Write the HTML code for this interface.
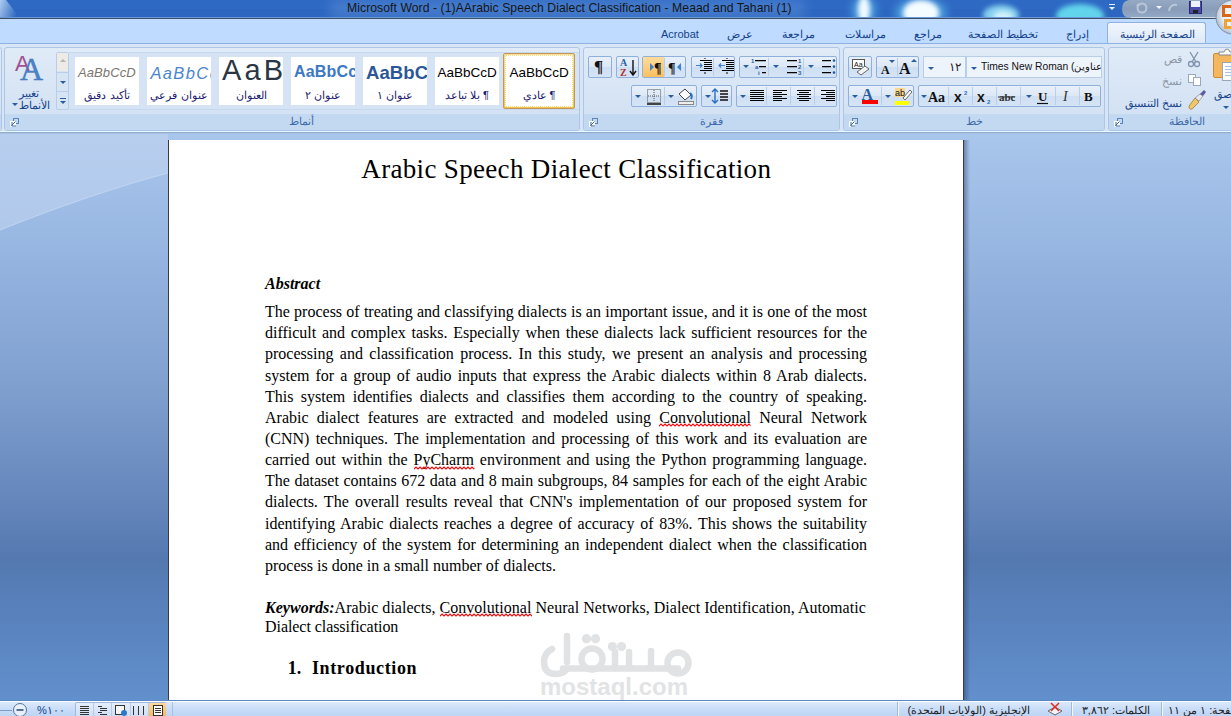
<!DOCTYPE html><html><head><meta charset="utf-8"><style>
*{margin:0;padding:0;box-sizing:border-box}
html,body{width:1231px;height:716px;overflow:hidden;background:#6a93cc}
body{position:relative;font-family:"Liberation Sans",sans-serif;white-space:nowrap}
.a{position:absolute}
svg{position:absolute;overflow:visible}
#title{left:0;top:0;width:1231px;height:19px;background:#2b62b6;overflow:hidden}
#ttext{left:347px;top:1px;font-size:12.2px;color:#161616;white-space:pre;line-height:14px;letter-spacing:0.06px}
#tabs{left:0;top:19px;width:1231px;height:25px;background:#bfdbff}
.tab{top:10px;font-size:11px;color:#15428b;white-space:pre;line-height:12px}
#ribbon{left:0;top:44px;width:1231px;height:90px;background:linear-gradient(180deg,#d9e6f6 0%,#d6e4f5 100%)}
.grp{top:3px;height:84px;border:1px solid #adc6e5;border-radius:3px;background:linear-gradient(180deg,#e0ebf7 0%,#d8e5f5 50%,#d0e0f3 100%);overflow:hidden}
.glab{position:absolute;left:0;right:0;bottom:0;height:16px;background:#c3d8f1;text-align:center;font-size:11px;color:#3e6aaa;line-height:15px}
.btn{border:1px solid #8fb0da;border-radius:2px;background:linear-gradient(180deg,#e8f0fa 0%,#dde8f6 48%,#cfdff3 52%,#d5e4f5 100%);overflow:hidden}
.sep{position:absolute;top:1px;bottom:1px;width:1px;background:#b9cfe9}
.dd{position:absolute;width:0;height:0;border-left:3px solid transparent;border-right:3px solid transparent;border-top:3px solid #2a5d9f}
#work{left:0;top:134px;width:1231px;height:566px;background:linear-gradient(180deg,#a9c6ec 0%,#97b6e1 20%,#7f9fcf 45%,#6586bb 65%,#5479b0 75%,#5a84c0 88%,#6290cc 100%)}
#page{left:168px;top:140px;width:796px;height:560px;background:#fff;border-left:1px solid #3c3c3c;border-right:1px solid #3c3c3c}
.ln{left:265px;width:602px;font-family:"Liberation Serif",serif;font-size:16px;color:#000;white-space:nowrap;text-align:justify;text-align-last:justify;line-height:21px;height:21px}
.last{text-align:left;text-align-last:left}
.ttl{font-family:"Liberation Serif",serif;font-size:27px;line-height:30px;letter-spacing:0.27px;white-space:nowrap;color:#000}
.intro{font-family:"Liberation Serif",serif;font-size:18px;font-weight:bold;line-height:21px;white-space:nowrap;color:#000}
u.sp{text-decoration:none;position:relative}
svg.zz{position:absolute;left:0;top:14.5px;width:100%;height:4px}
#status{left:0;top:700px;width:1231px;height:16px;background:linear-gradient(180deg,#5a87c6 0px,#5a87c6 1px,#ffffff 1px,#ffffff 2px,#dce9fb 2px,#c9ddf8 9px,#bdd5f4 16px)}
.st{top:704px;font-size:11px;color:#15428b;white-space:pre;line-height:12px}
.ar{direction:rtl;unicode-bidi:plaintext}
.sbox{top:57px;height:48px;width:64px;background:#fff;overflow:hidden}
.ssamp{position:absolute;left:0;right:0;top:7px;text-align:center;white-space:nowrap;line-height:18px}
.slab{position:absolute;left:0;right:0;top:32px;text-align:center;white-space:nowrap;font-size:11px;color:#1a1a6e;line-height:13px}
</style></head><body>
<svg width="0" height="0" style="position:absolute"><defs><pattern id="zz" width="4" height="4" patternUnits="userSpaceOnUse"><path d="M-2,1 L0,3 L2,1 L4,3 L6,1" stroke="#ff0000" fill="none" stroke-width="1.2"/></pattern></defs></svg>
<div id="title" class="a">
<svg width="1231" height="19" style="left:0;top:0">
<defs>
<filter id="bl" x="-50%" y="-50%" width="200%" height="200%"><feGaussianBlur stdDeviation="4"/></filter>
<filter id="bl3" x="-50%" y="-50%" width="200%" height="200%"><feGaussianBlur stdDeviation="2.5"/></filter>
<filter id="bl2" x="-50%" y="-50%" width="200%" height="200%"><feGaussianBlur stdDeviation="6"/></filter>
<linearGradient id="tl" x1="0" x2="1" y1="0" y2="0.3"><stop offset="0" stop-color="#d6ecff" stop-opacity="1"/><stop offset="1" stop-color="#d6ecff" stop-opacity="0"/></linearGradient>
</defs>
<rect x="0" y="0" width="1231" height="19" fill="#2c66c0"/>
<rect x="0" y="0" width="1231" height="9" fill="#3470c8" opacity=".35"/>
<polygon points="0,0 6,0 20,18 0,18" fill="url(#tl)" opacity=".75"/>
<rect x="330" y="0" width="475" height="19" fill="#6f9fe0" opacity=".35" filter="url(#bl2)"/>
<ellipse cx="864" cy="11" rx="12" ry="14" fill="#58b8ec" opacity=".7" filter="url(#bl)"/>
<ellipse cx="921" cy="13" rx="26" ry="14" fill="#58b8ec" opacity=".7" filter="url(#bl)"/>
<ellipse cx="864" cy="10" rx="6" ry="14" fill="#f0fbff" filter="url(#bl3)"/>
<ellipse cx="921" cy="13" rx="18" ry="13" fill="#f4fcff" filter="url(#bl3)"/>
<ellipse cx="1001" cy="15" rx="18" ry="10" fill="#8fdcf4" opacity=".9" filter="url(#bl3)"/>
<ellipse cx="1003" cy="17" rx="10" ry="6" fill="#e8faff" opacity=".8" filter="url(#bl3)"/>
<ellipse cx="1080" cy="16" rx="24" ry="12" fill="#62d4ec" filter="url(#bl3)"/>
</svg>
<div id="ttext" class="a">Microsoft Word - (1)AArabic Speech Dialect Classification - Meaad and Tahani (1)</div>
</div>
<div class="a" style="left:0;top:17px;width:1231px;height:1px;background:#6c9ad8"></div>
<div class="a" style="left:0;top:18px;width:1231px;height:1px;background:#3d4f68"></div>
<svg width="110" height="19" style="left:1115px;top:0">
<defs><linearGradient id="qg" x1="0" x2="0" y1="0" y2="1"><stop offset="0" stop-color="#a9b4c4"/><stop offset=".5" stop-color="#98a6b8"/><stop offset="1" stop-color="#a7b6c8"/></linearGradient></defs>
<path d="M14,0 H116 V18 H16 Q7,18 7,9 Q7,1 14,0 Z" fill="url(#qg)" opacity=".85"/>
<path d="M16,17.5 H112" stroke="#dfe6ee" stroke-width="1" opacity=".8"/>
<circle cx="27" cy="8" r="4.5" fill="none" stroke="#b8c6d8" stroke-width="2"/>
<path d="M23,3 l2,3 l-4,0 z" fill="#b8c6d8"/>
<path d="M41,6 l3,3 l3,-3 z" fill="#f4f8fc"/>
<path d="M54,11 q1,-7 8,-6" fill="none" stroke="#b8c6d8" stroke-width="2"/>
</svg>
<div class="a" style="left:1109px;top:4px;width:6px;height:1px;background:#e8f0ff"></div>
<div class="dd" style="left:1109px;top:7px;border-top-color:#e8f0ff"></div>
<svg width="16" height="16" style="left:1188px;top:0px">
<rect x="1.5" y="1.5" width="12" height="12" fill="#4a4aa8" stroke="#2a2a7a"/>
<rect x="3" y="1" width="9" height="6" fill="#eef2ff"/>
<rect x="5" y="10" width="5" height="3" fill="#222"/>
</svg>
<div id="tabs" class="a"></div>
<div class="a" style="left:1107px;top:22px;width:99px;height:24px;border:1px solid #8db2e3;border-bottom:none;border-radius:3px 3px 0 0;background:linear-gradient(180deg,#f1f6fd 0%,#e3edf9 60%,#dbe7f6 100%)"></div>
<div class="a tab" style="left:661px;top:28px">Acrobat</div>
<div class="a tab" style="left:707px;width:46px;text-align:right;top:28px" dir="rtl">عرض</div>
<div class="a tab" style="left:761px;width:54px;text-align:right;top:28px" dir="rtl">مراجعة</div>
<div class="a tab" style="left:824px;width:62px;text-align:right;top:28px" dir="rtl">مراسلات</div>
<div class="a tab" style="left:895px;width:47px;text-align:right;top:28px" dir="rtl">مراجع</div>
<div class="a tab" style="left:951px;width:87px;text-align:right;top:28px" dir="rtl">تخطيط الصفحة</div>
<div class="a tab" style="left:1047px;width:42px;text-align:right;top:28px" dir="rtl">إدراج</div>
<div class="a tab" style="left:1098px;width:97px;text-align:right;top:28px" dir="rtl">الصفحة الرئيسية</div>
<svg width="40" height="40" style="left:1210px;top:0">
<defs><radialGradient id="ob" cx="55%" cy="45%" r="60%"><stop offset="0" stop-color="#ffffff"/><stop offset=".6" stop-color="#e6eef6"/><stop offset="1" stop-color="#aab8c8"/></radialGradient></defs>
<circle cx="23" cy="17" r="17" fill="url(#ob)" stroke="#7e8ea2" stroke-width="1"/>
<path d="M12,5 h10 v3 h-7 v6 h7 v3 h-10 z" fill="#d9661a"/>
<path d="M14,19 h8 v10 h-8 z M17,22 v4 h5 v-4 z" fill="#eea23a" fill-rule="evenodd"/>
</svg>
<div id="ribbon" class="a"></div>
<div class="a" style="left:0;top:43px;width:1231px;height:1px;background:#8db2e3"></div>
<div class="a" style="left:0;top:131px;width:1231px;height:1px;background:#e6f8ff"></div>
<div class="a" style="left:0;top:132px;width:1231px;height:1px;background:#94adcd"></div>
<div class="a" style="left:0;top:133px;width:1231px;height:1px;background:#a7c1e4"></div>
<div class="a grp" style="left:-3px;top:47px;width:5px;height:84px"><div class="glab"></div><svg width="10" height="10" style="left:5px;top:70px"><rect x="3.5" y="0.5" width="5" height="5" fill="none" stroke="#5d84b8"/><rect x="0.5" y="3.5" width="5" height="5" fill="#fff" stroke="#fff"/><path d="M1.5,7.5 l4,-4 M2,4 v4 h4" stroke="#3b68a8" fill="none"/></svg></div>
<div class="a grp" style="left:4px;top:47px;width:576px;height:84px"><div class="glab"><span style="padding-left:18px">أنماط</span></div><svg width="10" height="10" style="left:5px;top:70px"><rect x="3.5" y="0.5" width="5" height="5" fill="none" stroke="#5d84b8"/><rect x="0.5" y="3.5" width="5" height="5" fill="#fff" stroke="#fff"/><path d="M1.5,7.5 l4,-4 M2,4 v4 h4" stroke="#3b68a8" fill="none"/></svg></div>
<div class="a grp" style="left:583px;top:47px;width:257px;height:84px"><div class="glab">فقرة</div><svg width="10" height="10" style="left:5px;top:70px"><rect x="3.5" y="0.5" width="5" height="5" fill="none" stroke="#5d84b8"/><rect x="0.5" y="3.5" width="5" height="5" fill="#fff" stroke="#fff"/><path d="M1.5,7.5 l4,-4 M2,4 v4 h4" stroke="#3b68a8" fill="none"/></svg></div>
<div class="a grp" style="left:843px;top:47px;width:262px;height:84px"><div class="glab">خط</div><svg width="10" height="10" style="left:5px;top:70px"><rect x="3.5" y="0.5" width="5" height="5" fill="none" stroke="#5d84b8"/><rect x="0.5" y="3.5" width="5" height="5" fill="#fff" stroke="#fff"/><path d="M1.5,7.5 l4,-4 M2,4 v4 h4" stroke="#3b68a8" fill="none"/></svg></div>
<div class="a grp" style="left:1108px;top:47px;width:158px;height:84px"><div class="glab">الحافظة</div><svg width="10" height="10" style="left:5px;top:70px"><rect x="3.5" y="0.5" width="5" height="5" fill="none" stroke="#5d84b8"/><rect x="0.5" y="3.5" width="5" height="5" fill="#fff" stroke="#fff"/><path d="M1.5,7.5 l4,-4 M2,4 v4 h4" stroke="#3b68a8" fill="none"/></svg></div>
<svg width="40" height="32" style="left:12px;top:52px">
<text x="3" y="19" font-family="Liberation Sans" font-size="22" fill="#a0508e">A</text>
<text x="8" y="28" font-family="Liberation Serif" font-size="32" fill="#4a84c8" stroke="#3a6fb0" stroke-width=".4">A</text>
</svg>
<div class="a ar" style="left:8px;top:87px;width:42px;text-align:center;font-size:11px;color:#15428b;line-height:12px" dir="rtl">تغيير</div>
<div class="a ar" style="left:17px;top:99px;width:34px;text-align:center;font-size:11px;color:#15428b;line-height:12px" dir="rtl">الأنماط</div>
<div class="dd" style="left:12px;top:103px;border-top-color:#2a5d9f"></div>
<div class="a" style="left:56px;top:52px;width:13px;height:58px;border:1px solid #b8cde8;border-radius:2px;background:#d6e4f4"></div>
<div class="a" style="left:57px;top:53px;width:11px;height:18px;background:#ecebe6"></div>
<div class="a" style="left:57px;top:72px;width:11px;height:1px;background:#b8cde8"></div>
<div class="a" style="left:57px;top:91px;width:11px;height:1px;background:#b8cde8"></div>
<div class="dd" style="left:60px;top:59px;border-top:none;border-bottom:3px solid #b4b4b4"></div>
<div class="dd" style="left:60px;top:81px;border-top-color:#2a5d9f"></div>
<div class="a" style="left:60px;top:98px;width:6px;height:1px;background:#2a5d9f"></div>
<div class="dd" style="left:60px;top:101px;border-top-color:#2a5d9f"></div>
<div class="a" style="left:69px;top:52px;width:510px;height:58px;background:#d5e3f4;border-top:1px solid #c6d8ee;border-bottom:1px solid #c6d8ee"></div>
<div class="a sbox" style="left:75px"><div class="ssamp" style="left:3px;right:auto;text-align:left;font-size:13px;font-weight:normal;font-style:italic;color:#7b7670;top:0.90px;line-height:30px;letter-spacing:0.1px">AaBbCcD</div><div class="slab" dir="rtl">تأكيد دقيق</div></div>
<div class="a sbox" style="left:147px"><div class="ssamp" style="left:3.4px;right:auto;text-align:left;font-size:16.5px;font-weight:normal;font-style:italic;color:#4a86cf;top:0.88px;line-height:30px;letter-spacing:1.4px">AaBbCc</div><div class="slab" dir="rtl">عنوان فرعي</div></div>
<div class="a sbox" style="left:219px"><div class="ssamp" style="left:3px;right:auto;text-align:left;font-size:29px;font-weight:normal;font-style:normal;color:#2a3644;top:-2.45px;line-height:30px;letter-spacing:3.2px">AaBbC</div><div class="slab" dir="rtl">العنوان</div></div>
<div class="a sbox" style="left:291px"><div class="ssamp" style="left:3px;right:auto;text-align:left;font-size:16px;font-weight:bold;font-style:normal;color:#3b78c6;top:0.36px;line-height:30px;letter-spacing:0.2px">AaBbCc</div><div class="slab" dir="rtl">عنوان ٢</div></div>
<div class="a sbox" style="left:363px"><div class="ssamp" style="left:3px;right:auto;text-align:left;font-size:18.5px;font-weight:bold;font-style:normal;color:#2b5798;top:0.99px;line-height:30px;letter-spacing:0.1px">AaBbC</div><div class="slab" dir="rtl">عنوان ١</div></div>
<div class="a sbox" style="left:435px"><div class="ssamp" style="left:2.5px;right:auto;text-align:left;font-size:13.5px;font-weight:normal;font-style:normal;color:#000;top:1.12px;line-height:30px;letter-spacing:0px">AaBbCcD</div><div class="slab" dir="rtl">¶ بلا تباعد</div></div>
<div class="a" style="left:503px;top:53px;width:72px;height:56px;border:1px solid #c29858;border-radius:2px;background:linear-gradient(180deg,#fbdc9a,#f7bf52);"></div>
<div class="a" style="left:505px;top:55px;width:68px;height:52px;background:#fff;border:1px dotted #f8e070"></div>
<div class="a sbox" style="left:507px"><div class="ssamp" style="left:2.5px;right:auto;text-align:left;font-size:13.5px;font-weight:normal;font-style:normal;color:#000;top:1.12px;line-height:30px;letter-spacing:0px">AaBbCcD</div><div class="slab" dir="rtl">¶ عادي</div></div>
<div class="a btn" style="left:588px;top:56px;width:24px;height:22px;"></div>
<div class="a" style="left:594px;top:57px;font:bold 17px 'Liberation Serif';color:#111;line-height:20px">¶</div>
<div class="a btn" style="left:616px;top:56px;width:23px;height:22px;"></div>
<svg width="24" height="22" style="left:616px;top:56px">
<text x="4" y="10" font-family="Liberation Serif" font-size="10" fill="#2d5fa8" font-weight="bold">A</text>
<text x="4" y="20" font-family="Liberation Serif" font-size="10" fill="#b0302a" font-weight="bold">Z</text>
<path d="M17,4 V18 M14,15 L17,19 L20,15" stroke="#111" stroke-width="1.4" fill="none"/>
</svg>
<div class="a btn" style="left:642px;top:56px;width:44px;height:22px;"><div class="sep" style="left:21px"></div></div>
<div class="a" style="left:643px;top:57px;width:21px;height:20px;background:linear-gradient(180deg,#fddc9c,#fbc060)"></div>
<svg width="44" height="22" style="left:642px;top:56px">
<path d="M8,7 L12,11 L8,15 Z" fill="#3b7fd0"/>
<text x="12" y="17" font-family="Liberation Serif" font-size="14" fill="#111" font-weight="bold">¶</text>
<text x="26" y="17" font-family="Liberation Serif" font-size="14" fill="#111" font-weight="bold">¶</text>
<path d="M39,7 L35,11 L39,15 Z" fill="#3b7fd0"/>
</svg>
<div class="a btn" style="left:691px;top:56px;width:44px;height:22px;"><div class="sep" style="left:21px"></div></div>
<svg width="44" height="22" style="left:691px;top:56px">
<g stroke="#000" stroke-width="1">
<path d="M9,4.5 h12 M13,6.5 h8 M13,8.5 h8 M13,10.5 h8 M13,12.5 h8 M9,14.5 h12"/>
<path d="M31,4.5 h12 M35,6.5 h8 M35,8.5 h8 M35,10.5 h8 M35,12.5 h8 M31,14.5 h12"/>
<path d="M14,2 v1 M14,16 v2 M36,2 v1 M36,16 v2"/>
</g>
<path d="M5,9.5 h6 M9,7.5 l2,2 l-2,2" stroke="#3b7fd0" stroke-width="1.2" fill="none"/>
<path d="M34,9.5 h-6 M30,7.5 l-2,2 l2,2" stroke="#3b7fd0" stroke-width="1.2" fill="none"/>
</svg>
<div class="a btn" style="left:739px;top:56px;width:98px;height:22px;"><div class="sep" style="left:28px"></div><div class="sep" style="left:63px"></div></div>
<svg width="98" height="22" style="left:739px;top:56px">
<g fill="#2a5d9f"><path d="M4,9 h6 l-3,3 z"/><path d="M34,9 h6 l-3,3 z"/><path d="M69,9 h6 l-3,3 z"/></g>
<g stroke="#000" stroke-width="1.2">
<path d="M16,4.6 h11 M20,10.6 h7 M23,16.6 h4"/>
<path d="M48,4.6 h10 M48,10.6 h10 M48,16.6 h10"/>
<path d="M83,4.6 h9 M83,10.6 h9 M83,16.6 h9"/>
</g>
<g fill="#2a5d9f" font-family="Liberation Sans" font-size="6" font-weight="bold"><text x="12" y="7">1</text><text x="16" y="13">a</text><text x="19" y="19">i</text>
<text x="59" y="7">1</text><text x="59" y="13">2</text><text x="59" y="19">3</text></g>
<g fill="#2a5d9f"><circle cx="95" cy="4.6" r="1.3"/><circle cx="95" cy="10.6" r="1.3"/><circle cx="95" cy="16.6" r="1.3"/></g>
</svg>
<div class="a btn" style="left:631px;top:85px;width:66px;height:22px;"><div class="sep" style="left:32px"></div></div>
<svg width="66" height="22" style="left:631px;top:85px">
<g fill="#2a5d9f"><path d="M4,10 h6 l-3,3 z"/><path d="M37,10 h6 l-3,3 z"/></g>
<g stroke="#555" stroke-width="1" stroke-dasharray="1,1" fill="none"><rect x="16.5" y="4.5" width="13" height="13"/><path d="M23,5 v12 M17,11 h12"/></g>
<path d="M16,19 h14" stroke="#111" stroke-width="1.5"/>
<path d="M48,9 l6,-5 l6,6 l-6,5 z" fill="#fff" stroke="#444"/>
<path d="M59,8 q3,2 1,6" stroke="#2a6fc8" stroke-width="2" fill="none"/>
<rect x="47.5" y="16.5" width="15" height="3" fill="#eee" stroke="#888"/>
</svg>
<div class="a btn" style="left:701px;top:85px;width:31px;height:22px;"></div>
<svg width="31" height="22" style="left:701px;top:85px">
<path d="M4,10 h6 l-3,3 z" fill="#2a5d9f"/>
<path d="M14,4 v14 M11,7 l3,-3 l3,3 M11,15 l3,3 l3,-3" stroke="#2a6fc8" stroke-width="1.4" fill="none"/>
<path d="M19,6 h8 M19,9 h8 M19,12 h8 M19,15 h8" stroke="#111" stroke-width="1.4"/>
</svg>
<div class="a btn" style="left:736px;top:85px;width:101px;height:22px;"><div class="sep" style="left:29px"></div><div class="sep" style="left:53px"></div><div class="sep" style="left:77px"></div></div>
<svg width="101" height="22" style="left:736px;top:85px">
<path d="M4,10 h6 l-3,3 z" fill="#2a5d9f"/>
<g stroke="#000" stroke-width="1">
<path d="M14,5.5 h14 M14,7.5 h14 M14,9.5 h14 M14,11.5 h14 M14,13.5 h14 M14,15.5 h14"/>
<path d="M37,5.5 h14 M37,7.5 h9 M37,9.5 h14 M37,11.5 h9 M37,13.5 h14 M37,15.5 h9"/>
<path d="M61,5.5 h14 M63,7.5 h10 M61,9.5 h14 M63,11.5 h10 M61,13.5 h14 M63,15.5 h10"/>
<path d="M85,5.5 h14 M90,7.5 h9 M85,9.5 h14 M90,11.5 h9 M85,13.5 h14 M90,15.5 h9"/>
</g>
</svg>
<div class="a btn" style="left:848px;top:56px;width:24px;height:22px;"></div>
<svg width="24" height="22" style="left:848px;top:56px">
<rect x="4.5" y="3.5" width="12" height="9" fill="#fff" stroke="#555"/>
<text x="6" y="11" font-family="Liberation Sans" font-size="7" fill="#111">Aa</text>
<path d="M9,16 l8,-6 l4,3 l-8,6 z" fill="#f4f4f4" stroke="#666"/>
</svg>
<div class="a btn" style="left:876px;top:56px;width:43px;height:22px;"><div class="sep" style="left:20px"></div></div>
<svg width="44" height="22" style="left:876px;top:56px">
<text x="5" y="18" font-family="Liberation Serif" font-size="12" fill="#111" font-weight="bold">A</text>
<path d="M13,4 h6 l-3,3 z" fill="#2a5d9f"/>
<text x="23" y="18" font-family="Liberation Serif" font-size="16" fill="#111" font-weight="bold">A</text>
<path d="M35,6 h6 l-3,-3 z" fill="#2a5d9f"/>
</svg>
<div class="a" style="left:923px;top:56px;width:43px;height:22px;border:1px solid #b9cde6;background:#eef4fc"></div>
<div class="dd" style="left:928px;top:67px;border-top-color:#2a5d9f"></div>
<div class="a" style="left:949px;top:60px;font-size:12px;color:#222;line-height:14px">١٢</div>
<div class="a" style="left:966px;top:56px;width:136px;height:22px;border:1px solid #b9cde6;background:#eef4fc;overflow:hidden"></div>
<div class="dd" style="left:971px;top:67px;border-top-color:#2a5d9f"></div>
<div class="a" style="left:981px;top:60px;width:120px;overflow:hidden;font-size:10.3px;color:#111;line-height:14px;white-space:nowrap">Times New Roman (<span dir="rtl">عناوين</span>)</div>
<div class="a btn" style="left:848px;top:85px;width:66px;height:22px;"><div class="sep" style="left:32px"></div></div>
<svg width="66" height="22" style="left:848px;top:85px">
<path d="M4,10 h6 l-3,3 z" fill="#2a5d9f"/>
<text x="13.5" y="15" font-family="Liberation Serif" font-size="16" fill="#2a5d9f" font-weight="bold">A</text>
<rect x="14" y="15" width="16" height="4" fill="#f00"/>
<path d="M37,10 h6 l-3,3 z" fill="#2a5d9f"/>
<rect x="47" y="3" width="10" height="9" fill="#fcd68c"/>
<text x="47" y="11" font-family="Liberation Sans" font-size="9" fill="#111">ab</text>
<path d="M55,13 l7,-8 l2,2 l-7,8 z" fill="#fff" stroke="#666"/>
<rect x="47" y="16" width="14" height="4" fill="#ff0"/>
</svg>
<div class="a btn" style="left:918px;top:85px;width:183px;height:22px;"><div class="sep" style="left:29px"></div><div class="sep" style="left:53px"></div><div class="sep" style="left:77px"></div><div class="sep" style="left:101px"></div><div class="sep" style="left:136px"></div><div class="sep" style="left:160px"></div></div>
<svg width="184" height="22" style="left:918px;top:85px">
<path d="M3,10 h6 l-3,3 z" fill="#2a5d9f"/>
<text x="10" y="17" font-family="Liberation Serif" font-size="14" fill="#111" font-weight="bold">Aa</text>
<text x="36" y="17" font-family="Liberation Sans" font-size="14" fill="#111" font-weight="bold">x</text><text x="46" y="10" font-family="Liberation Sans" font-size="6" fill="#2a6fc8" font-weight="bold">2</text>
<text x="59" y="17" font-family="Liberation Sans" font-size="14" fill="#111" font-weight="bold">x</text><text x="69" y="19" font-family="Liberation Sans" font-size="6" fill="#2a6fc8" font-weight="bold">2</text>
<text x="81" y="16" font-family="Liberation Serif" font-size="11" fill="#333" font-weight="bold">abc</text><path d="M80,12 h17" stroke="#333"/>
<path d="M108,10 h6 l-3,3 z" fill="#2a5d9f"/>
<text x="120" y="16" font-family="Liberation Serif" font-size="13" fill="#111" font-weight="bold">U</text><path d="M119,18.5 h11" stroke="#111" stroke-width="1.2"/>
<text x="145" y="16" font-family="Liberation Serif" font-size="14" fill="#333" font-style="italic">I</text>
<text x="166" y="16" font-family="Liberation Serif" font-size="13" fill="#111" font-weight="bold">B</text>
</svg>
<svg width="40" height="40" style="left:1210px;top:48px">
<rect x="3.5" y="5.5" width="30" height="24" rx="1.5" fill="#f5b660" stroke="#d08a30"/>
<path d="M9,4 h5 q1,-3 3,-3 q2,0 3,3 h5 v3 h-16 z" fill="#fafafa" stroke="#888"/>
<rect x="12.5" y="14.5" width="20" height="18" fill="#fff" stroke="#9aa6b8"/>
<path d="M15,18.5 h14 M15,21.5 h14 M15,24.5 h14 M15,27.5 h14" stroke="#a8c0dc"/>
</svg>
<div class="a" style="left:1214px;top:88px;font-size:11px;color:#15428b;line-height:12px">صق</div>
<div class="dd" style="left:1223px;top:106px;border-top-color:#2a5d9f"></div>
<svg width="24" height="64" style="left:1184px;top:50px">
<path d="M6,2 l6,10 M14,2 l-6,10" stroke="#7f93ad" stroke-width="1.3"/>
<circle cx="7" cy="14" r="2.5" fill="none" stroke="#7f93ad" stroke-width="1.3"/><circle cx="13" cy="14" r="2.5" fill="none" stroke="#7f93ad" stroke-width="1.3"/>
<rect x="4.5" y="24.5" width="7" height="8" fill="#fff" stroke="#9aa8bb"/><rect x="9.5" y="27.5" width="7" height="8" fill="#fff" stroke="#9aa8bb"/>
<g transform="translate(-2,5)"><path d="M7,51 l6,-8 l4,4 l-7,7 q-3,1 -3,-3 z" fill="#f0c868" stroke="#a07a38" stroke-width=".8"/><path d="M13,43 l5,-4 l3,2 l-4,5 z" fill="#e8e8f0" stroke="#777" stroke-width=".6"/><path d="M18,39 l4,-4 l2,2 l-3,4 z" fill="#5a5aa0"/></g>
</svg>
<div class="a" style="left:1152px;top:53px;width:30px;text-align:right;font-size:11px;color:#8a95a5;line-height:12px" dir="rtl">قص</div>
<div class="a" style="left:1142px;top:75px;width:40px;text-align:right;font-size:11px;color:#8a95a5;line-height:12px" dir="rtl">نسخ</div>
<div class="a" style="left:1110px;top:97px;width:72px;text-align:right;font-size:11px;color:#15428b;line-height:12px" dir="rtl">نسخ التنسيق</div>
<div id="work" class="a"></div>
<svg width="168" height="120" style="left:0;top:134px">
<path d="M0,0 H168 V39 Q90,60 0,96 Z" fill="#c3d6f0" opacity=".55"/>
<path d="M0,96 Q90,60 168,39" fill="none" stroke="#cfe0f5" stroke-width="1.2" opacity=".6"/>
</svg>
<div id="page" class="a"></div>
<div class="a" style="left:964px;top:140px;width:6px;height:560px;background:linear-gradient(90deg,rgba(40,60,100,.45),rgba(40,60,100,0))"></div>
<div class="a ttl" style="left:361.3px;top:153.9px;letter-spacing:0.33px">Arabic Speech Dialect Classification</div>
<div class="a ln last" style="top:272.9px;font-weight:bold;font-style:italic">Abstract</div>
<div class="a ln" style="top:301.10px">The process of treating and classifying dialects is an important issue, and it is one of the most</div>
<div class="a ln" style="top:322.25px">difficult and complex tasks. Especially when these dialects lack sufficient resources for the</div>
<div class="a ln" style="top:343.40px">processing and classification process. In this study, we present an analysis and processing</div>
<div class="a ln" style="top:364.55px">system for a group of audio inputs that express the Arabic dialects within 8 Arab dialects.</div>
<div class="a ln" style="top:385.70px">This system identifies dialects and classifies them according to the country of speaking.</div>
<div class="a ln" style="top:406.85px">Arabic dialect features are extracted and modeled using <u class="sp">Convolutional<svg class="zz"><rect width="100%" height="4" fill="url(#zz)"/></svg></u> Neural Network</div>
<div class="a ln" style="top:428.00px">(CNN) techniques. The implementation and processing of this work and its evaluation are</div>
<div class="a ln" style="top:449.15px">carried out within the <u class="sp">PyCharm<svg class="zz"><rect width="100%" height="4" fill="url(#zz)"/></svg></u> environment and using the Python programming language.</div>
<div class="a ln" style="top:470.30px">The dataset contains 672 data and 8 main subgroups, 84 samples for each of the eight Arabic</div>
<div class="a ln" style="top:491.45px">dialects. The overall results reveal that CNN's implementation of our proposed system for</div>
<div class="a ln" style="top:512.60px">identifying Arabic dialects reaches a degree of accuracy of 83%. This shows the suitability</div>
<div class="a ln" style="top:533.75px">and efficiency of the system for determining an independent dialect when the classification</div>
<div class="a ln last" style="top:554.90px">process is done in a small number of dialects.</div>
<div class="a ln last" style="top:596.8px;letter-spacing:0.03px"><b><i>Keywords:</i></b>Arabic dialects, <u class="sp">Convolutional<svg class="zz"><rect width="100%" height="4" fill="url(#zz)"/></svg></u> Neural Networks, Dialect Identification, Automatic</div>
<div class="a ln last" style="top:615.7px;letter-spacing:-0.06px">Dialect classification</div>
<div class="a intro" style="left:287.8px;top:657.8px">1.</div>
<div class="a intro" style="left:312px;top:657.8px;letter-spacing:0.62px">Introduction</div>
<svg width="160" height="70" style="left:535px;top:630px">
<g fill="none" stroke="#e1e2e3" stroke-width="6.5" stroke-linecap="round">
<path d="M32,6 V32"/>
<path d="M17,19 Q9,23 9,32 Q9,44 21,44 Q28,44 32,39"/>
<path d="M28,38.5 H143"/>
<circle cx="57" cy="29" r="10.5"/>
<path d="M80,22 V38 M94,22 V38 M116,21 V38"/>
<circle cx="143" cy="33" r="10.5"/>
</g>
<g fill="#e1e2e3"><circle cx="51.5" cy="8.7" r="4.6"/><circle cx="60.5" cy="8.7" r="4.6"/><circle cx="77.4" cy="16.5" r="4.6"/><circle cx="86.5" cy="16.5" r="4.6"/></g>
</svg>
<div class="a" style="left:540px;top:673px;font:bold 24px 'Liberation Sans';color:#e2e3e4;line-height:28px;white-space:nowrap;letter-spacing:0px">mostaql.com</div>
<div id="status" class="a"></div>
<svg width="180" height="16" style="left:0;top:700px">
<path d="M0,10.5 H12" stroke="#7f9cc4" stroke-width="1"/>
<circle cx="20" cy="10" r="6.5" fill="#e8f0fa" stroke="#56739f"/>
<path d="M16.5,10 H23.5" stroke="#2f4f7f" stroke-width="1.6"/>
</svg>
<div class="a st" style="left:37px;top:704px;color:#15428b">%١٠٠</div>
<div class="a" style="left:75px;top:702px;width:91px;height:14px;border:1px solid #9db9df;border-bottom:none;border-radius:2px 2px 0 0;background:linear-gradient(180deg,#e5eefb,#cfdff5)"></div>
<div class="a" style="left:93px;top:703px;width:1px;height:13px;background:#b7cbe6"></div>
<div class="a" style="left:111px;top:703px;width:1px;height:13px;background:#b7cbe6"></div>
<div class="a" style="left:130px;top:703px;width:1px;height:13px;background:#b7cbe6"></div>
<div class="a" style="left:148px;top:703px;width:1px;height:13px;background:#b7cbe6"></div>
<div class="a" style="left:149px;top:703px;width:17px;height:13px;background:linear-gradient(180deg,#fcd9a0,#f8b858)"></div>
<svg width="100" height="16" style="left:75px;top:700px">
<g stroke="#333" stroke-width="1">
<path d="M5,6.5 h9 M5,8.5 h9 M5,10.5 h9 M5,12.5 h9 M5,14.5 h9"/>
<path d="M23,6.5 h4 M25,8.5 h7 M25,10.5 h7 M23,12.5 h4 M25,14.5 h7"/>
<rect x="40.5" y="5.5" width="9" height="9" fill="#f6f6f6"/>
<path d="M58.5,6 v9 M63.5,6 v9 M68.5,6 v9" />
<rect x="78.5" y="5.5" width="9" height="10" fill="#fff"/><path d="M80,8.5 h6 M80,10.5 h6 M80,12.5 h6"/>
</g>
<circle cx="49" cy="13" r="3" fill="#2d79c9"/>
</svg>
<div class="a" style="left:172px;top:702px;width:1px;height:14px;background:#a8c0e2"></div>
<div class="a" style="left:897px;top:702px;width:1px;height:14px;background:#9fb8dc"></div>
<div class="a" style="left:898px;top:702px;width:1px;height:14px;background:#f4f8fe"></div>
<div class="a" style="left:1071px;top:702px;width:1px;height:14px;background:#9fb8dc"></div>
<div class="a" style="left:1072px;top:702px;width:1px;height:14px;background:#f4f8fe"></div>
<div class="a" style="left:1161px;top:702px;width:1px;height:14px;background:#9fb8dc"></div>
<div class="a" style="left:1162px;top:702px;width:1px;height:14px;background:#f4f8fe"></div>
<div class="a st ar" style="left:890px;width:140px;text-align:right;color:#222" dir="rtl">الإنجليزية (الولايات المتحدة)</div>
<svg width="18" height="16" style="left:1046px;top:700px">
<path d="M2,11 l7,-4 l7,4 l-7,4 z" fill="#f4f4f4" stroke="#667"/>
<path d="M5,3 l8,8 M13,3 l-8,8" stroke="#e03020" stroke-width="1.6"/>
</svg>
<div class="a st ar" style="left:1070px;width:80px;text-align:right;color:#222" dir="rtl">الكلمات: ٣,٨٦٢</div>
<div class="a st ar" style="left:1168px;width:90px;text-align:left;color:#222" dir="rtl">صفحة: ١ من ١١</div>
</body></html>
